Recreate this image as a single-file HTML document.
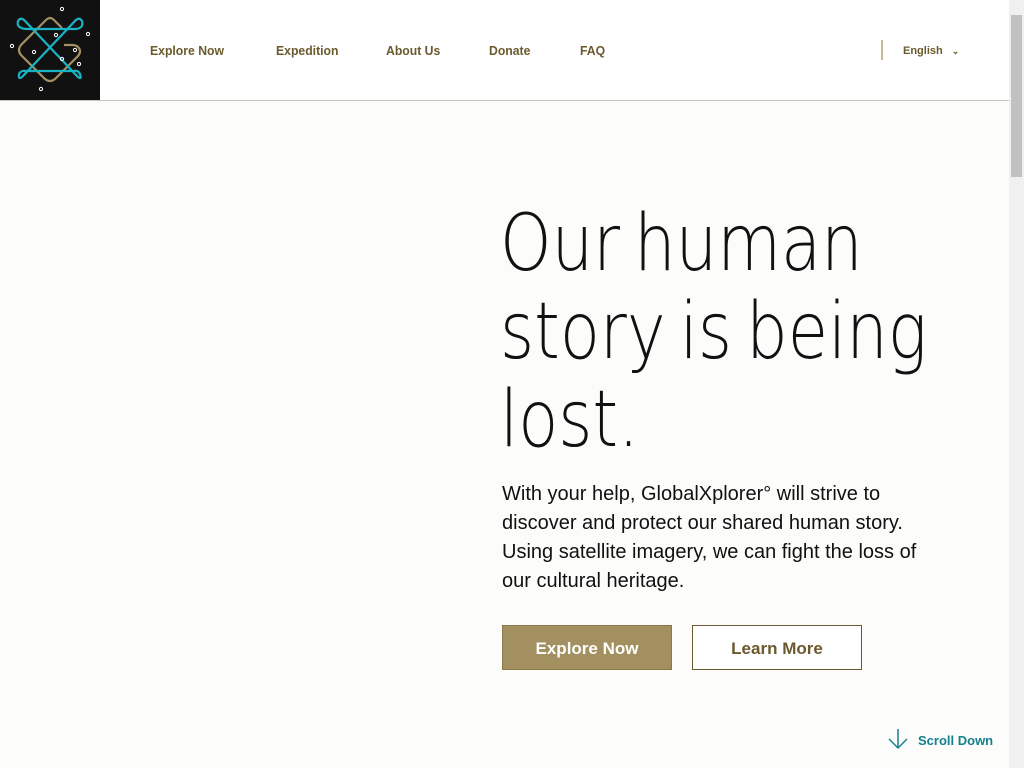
<!DOCTYPE html>
<html><head><style>
*{margin:0;padding:0;box-sizing:border-box}
body{width:1024px;height:768px;overflow:hidden;background:#fcfcfa;font-family:"Liberation Sans",sans-serif;position:relative}
header{position:absolute;left:0;top:0;width:1009px;height:101px;background:#fff;border-bottom:1px solid #c8c4bb}
.logo{position:absolute;left:0;top:0;width:100px;height:100px;background:#111}
nav a{position:absolute;top:43px;font-size:13px;font-weight:bold;color:#6b5a2e;text-decoration:none;transform:scaleX(0.94);transform-origin:left}
.sep{position:absolute;left:881px;top:40px;width:2px;height:20px;background:#c9b88f}
.lang{position:absolute;left:903px;top:45px;font-size:11px;color:#6b5a2e;font-weight:bold}
.sb{position:absolute;left:1009px;top:0;width:15px;height:768px;background:#f0f0f0}
.thumb{position:absolute;left:1011px;top:15px;width:11px;height:162px;background:#c1c1c1}
h1{position:absolute;left:500px;top:200px;font-family:"DejaVu Sans","Liberation Sans",sans-serif;font-weight:200;font-size:78px;line-height:88px;color:#111;letter-spacing:0;word-spacing:-8px;transform:scaleX(0.84);transform-origin:left;white-space:nowrap}
p{position:absolute;left:502px;top:480px;width:440px;font-size:20px;line-height:29px;color:#111}
.b{position:absolute;top:625px;width:170px;height:45px;font-size:17px;font-weight:bold;text-align:center;line-height:45px}
.b1{left:502px;background:#a39060;color:#fff;border:1px solid #8a7848}
.b2{left:692px;border:1px solid #6b5a2e;color:#6b5a2e;background:#fff}
.sd{position:absolute;left:918px;top:733px;font-size:13px;font-weight:bold;color:#16808f}
</style></head><body>
<header>
<div class="logo"><svg width="100" height="100" viewBox="0 0 100 100" fill="none">
<path d="M62 28 L54 20 Q50 16 46 20 L21 45 Q17 50 21 55 L45 79 Q50 83 55 79 L78 56 Q82 51 78 47 Q76 45 72 45 L64 45" stroke="#a39060" stroke-width="2.2"/>
<path d="M26 29 L76 29 M24 71 L74 71 M26 29 Q16 28 18 21 Q21 16 26 22 L78 77 Q82 80 80 74 Q78 70 74 71 M76 29 Q84 28 82 21 Q79 16 74 22 L22 77 Q18 80 19 74 Q21 70 26 71" stroke="#19b3c3" stroke-width="2.2"/>
<g stroke="#fff" stroke-width="1" fill="none"><circle cx="62" cy="9" r="1.6"/><circle cx="88" cy="34" r="1.6"/><circle cx="12" cy="46" r="1.6"/><circle cx="56" cy="35" r="1.6"/><circle cx="34" cy="52" r="1.6"/><circle cx="75" cy="50" r="1.6"/><circle cx="62" cy="59" r="1.6"/><circle cx="79" cy="64" r="1.6"/><circle cx="41" cy="89" r="1.6"/></g>
</svg></div>
<nav><a style="left:150px">Explore Now</a><a style="left:276px">Expedition</a><a style="left:386px">About Us</a><a style="left:489px">Donate</a><a style="left:580px">FAQ</a></nav>
<div class="sep"></div>
<div class="lang">English <span style="margin-left:6px;font-size:9px">&#8964;</span></div>
</header>
<div class="sb"></div><div class="thumb"></div>
<h1>Our human<br>story is being<br>lost.</h1>
<p>With your help, GlobalXplorer° will strive to discover and protect our shared human story. Using satellite imagery, we can fight the loss of our cultural heritage.</p>
<div class="b b1">Explore Now</div>
<div class="b b2">Learn More</div>
<svg style="position:absolute;left:887px;top:728px" width="22" height="22" viewBox="0 0 22 22" fill="none" stroke="#16808f" stroke-width="1.5"><path d="M11 1V20M2 11L11 20L20 11"/></svg>
<div class="sd">Scroll Down</div>
</body></html>
